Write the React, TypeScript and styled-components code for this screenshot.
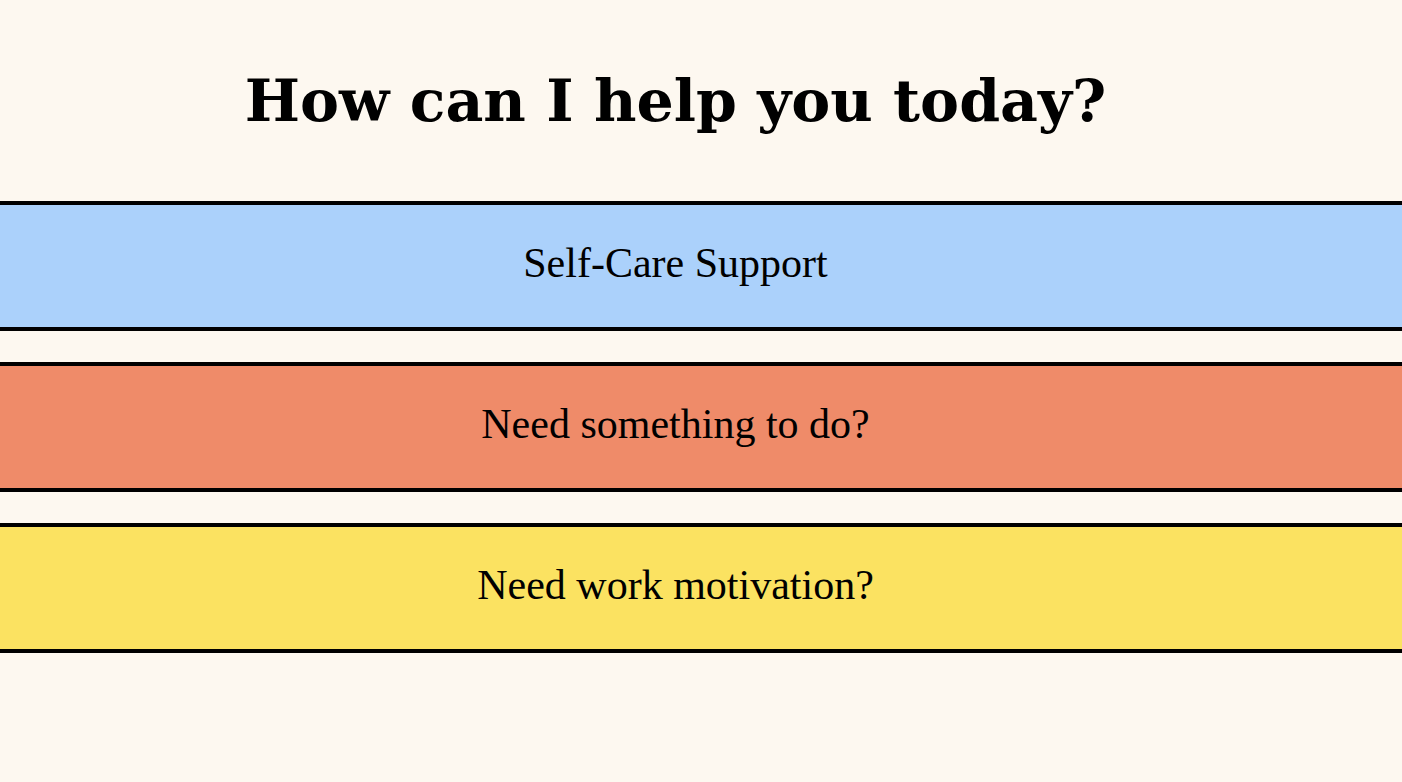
import styled, { createGlobalStyle } from 'styled-components'

const GlobalStyle = createGlobalStyle`
  html, body {
    margin: 0;
    padding: 0;
    background: #fdf8f0;
  }
  body {
    font-family: 'Liberation Serif', Georgia, serif;
    color: #000;
  }
`

const Page = styled.main`
  display: flex;
  flex-direction: column;
  min-height: 100vh;
  padding-top: 66px;
  box-sizing: border-box;
`

const Title = styled.h1`
  margin: 0 0 66px;
  padding-right: 51px;
  font-family: 'DejaVu Serif', Georgia, serif;
  font-size: 58.5px;
  font-weight: 700;
  text-align: center;
  line-height: normal;
`

const Options = styled.div`
  display: flex;
  flex-direction: column;
  gap: 31px;
`

type Tone = 'blue' | 'orange' | 'yellow'

const tones: Record<Tone, string> = {
  blue: '#abd1fb',
  orange: '#ef8b69',
  yellow: '#fbe261',
}

const Option = styled.button<{ $tone: Tone }>`
  display: flex;
  align-items: center;
  justify-content: center;
  height: 130px;
  width: 100%;
  padding: 0 51px 6px 0;
  box-sizing: border-box;
  border: none;
  border-top: 4px solid #000;
  border-bottom: 4px solid #000;
  background: ${({ $tone }) => tones[$tone]};
  font-family: inherit;
  font-size: 42px;
  color: #000;
  cursor: pointer;
`

const options: { label: string; tone: Tone }[] = [
  { label: 'Self-Care Support', tone: 'blue' },
  { label: 'Need something to do?', tone: 'orange' },
  { label: 'Need work motivation?', tone: 'yellow' },
]

export default function App() {
  return (
    <>
      <GlobalStyle />
      <Page>
        <Title>How can I help you today?</Title>
        <Options>
          {options.map((o) => (
            <Option key={o.label} $tone={o.tone}>
              {o.label}
            </Option>
          ))}
        </Options>
      </Page>
    </>
  )
}
